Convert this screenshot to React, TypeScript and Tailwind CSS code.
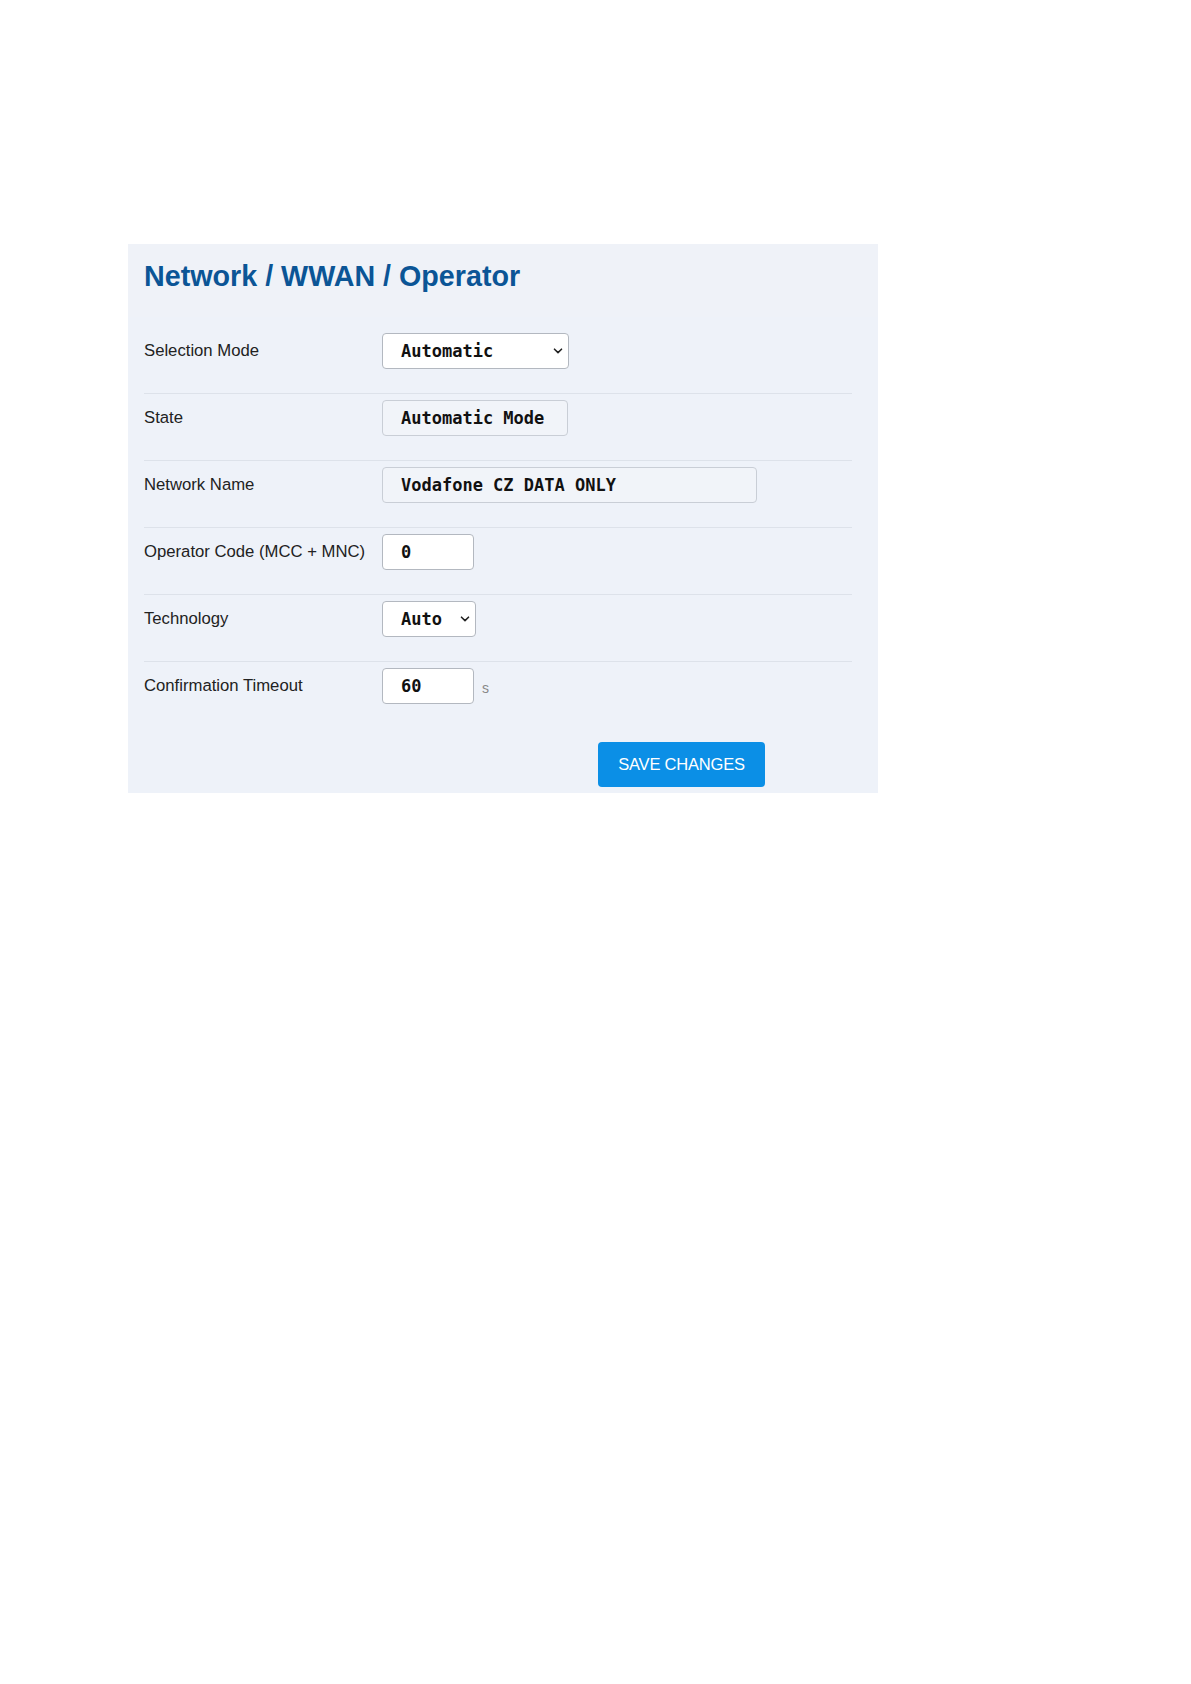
import React from "react"

const sans = { fontFamily: '"Liberation Sans", Arial, sans-serif' }
const mono = { fontFamily: '"DejaVu Sans Mono", "Liberation Mono", monospace' }

function Chevron() {
  return (
    <svg width="10" height="6" viewBox="0 0 10 6" className="absolute right-[5px] top-1/2 -translate-y-1/2">
      <path d="M1.5 1.2 L5 4.6 L8.5 1.2" fill="none" stroke="#222" strokeWidth="1.6" strokeLinecap="round" strokeLinejoin="round" />
    </svg>
  )
}

function Box({ value, width, select, readonly }: { value: string; width: string; select?: boolean; readonly?: boolean }) {
  return (
    <div
      className={`relative h-[36px] ${width} flex items-center pl-[18px] pt-[2px] rounded-[4px] border ${
        readonly ? "bg-[#f1f4f9] border-[#c9ced6]" : "bg-white border-[#b3b8c0]"
      } text-[17px] font-bold text-[#111]`}
      style={mono}
    >
      {value}
      {select && <Chevron />}
    </div>
  )
}

function Row({ label, children, last }: { label: string; children: React.ReactNode; last?: boolean }) {
  return (
    <div className={`flex items-center pt-[6px] ${last ? "" : "pb-[24px] border-b border-[#dde2ea]"}`}>
      <div className="w-[238px] text-[16.7px] text-[#222]" style={sans}>
        {label}
      </div>
      {children}
    </div>
  )
}

export default function App() {
  return (
    <div className="min-h-screen bg-white pt-[244px] pl-[128px]">
      <div className="w-[750px] bg-[#eef2f9] pb-[6px]">
        <div className="h-[73px] px-[16px] pt-[14px] bg-[#eff2f8]">
          <h1 className="text-[28.7px] leading-[36px] font-bold text-[#0b5596]" style={sans}>
            Network / WWAN / Operator
          </h1>
        </div>
        <div className="w-[724px] pl-[16px] pt-[10px]">
          <Row label="Selection Mode">
            <Box value="Automatic" width="w-[187px]" select />
          </Row>
          <Row label="State">
            <Box value="Automatic Mode" width="w-[186px]" readonly />
          </Row>
          <Row label="Network Name">
            <Box value="Vodafone CZ DATA ONLY" width="w-[375px]" readonly />
          </Row>
          <Row label="Operator Code (MCC + MNC)">
            <Box value="0" width="w-[92px]" />
          </Row>
          <Row label="Technology">
            <Box value="Auto" width="w-[94px]" select />
          </Row>
          <Row label="Confirmation Timeout" last>
            <Box value="60" width="w-[92px]" />
            <span className="ml-[8px] mt-[4px] text-[14px] text-[#888]" style={sans}>
              s
            </span>
          </Row>
          <div className="mt-[38px] ml-[454px]">
            <button
              className="w-[167px] h-[45px] rounded-[4px] bg-[#0b8fe6] text-white text-[16.5px] tracking-[-0.2px]"
              style={sans}
            >
              SAVE CHANGES
            </button>
          </div>
        </div>
      </div>
    </div>
  )
}
